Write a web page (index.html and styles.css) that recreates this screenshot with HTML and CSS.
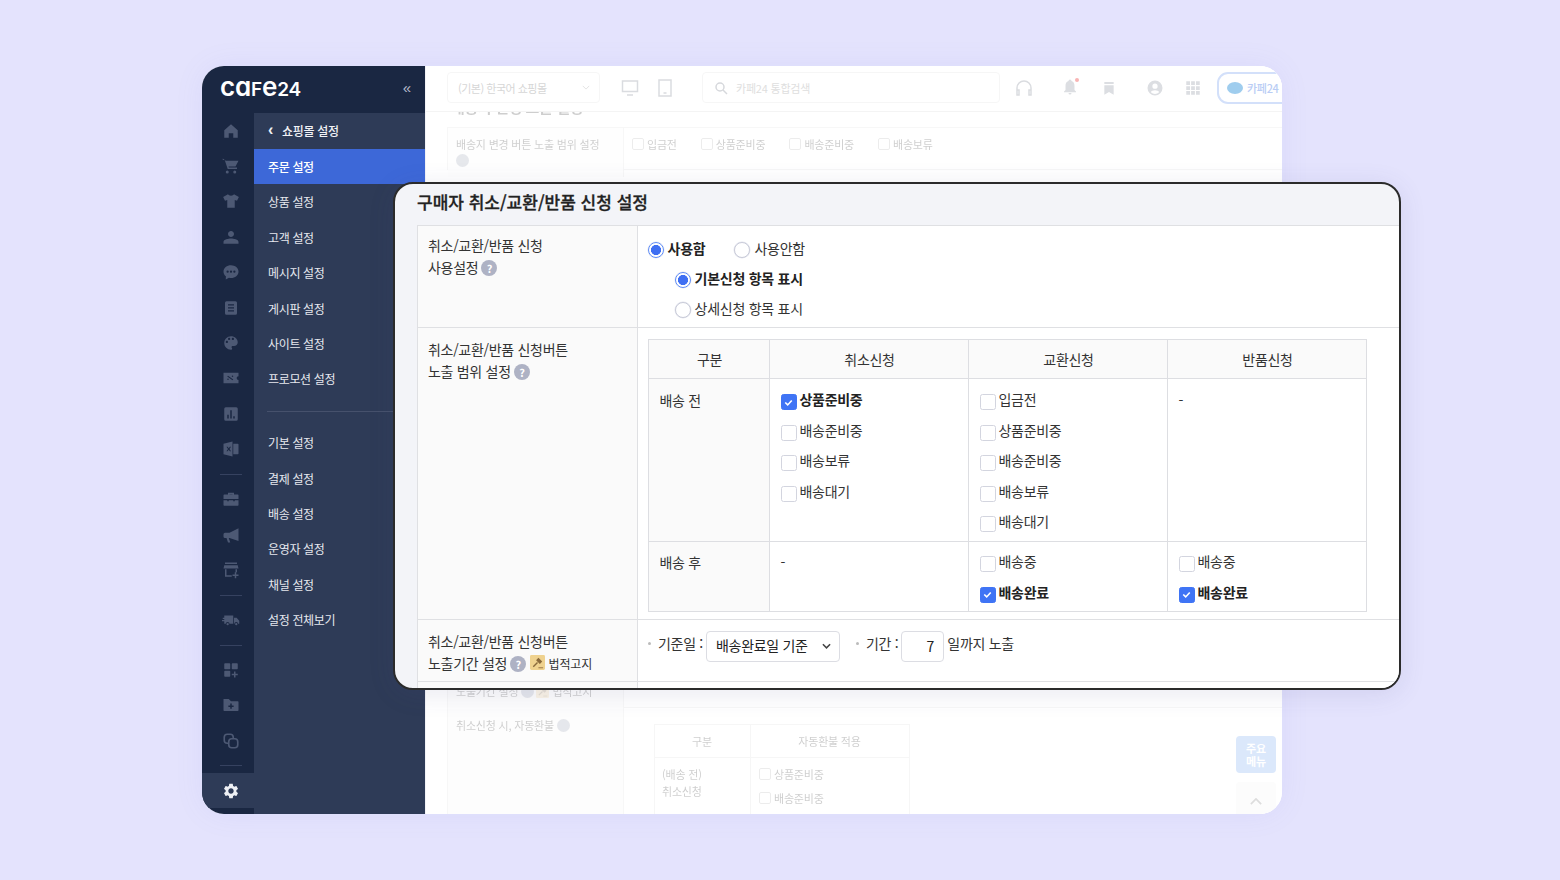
FILE: index.html
```html
<!DOCTYPE html>
<html lang="ko">
<head>
<meta charset="utf-8">
<title>구매자 취소/교환/반품 신청 설정</title>
<link rel="stylesheet" href="styles.css">
</head>
<body>
<svg class="defs" aria-hidden="true">
  <symbol id="i-home" viewBox="0 0 24 24"><path d="M12 3 3 11v10h6v-6h6v6h6V11z"/></symbol>
  <symbol id="i-cart" viewBox="0 0 24 24"><path d="M7 18a2 2 0 1 0 0 4 2 2 0 0 0 0-4zm10 0a2 2 0 1 0 0 4 2 2 0 0 0 0-4zM1 2v2h2.600l1 3 3 9H20v-2H9.200l-.5-1.500H18L22 5H5z"/></symbol>
  <symbol id="i-shirt" viewBox="0 0 24 24"><path d="M8 3 1.500 6.500 4 11.500l3-1V21h10V10.500l3 1 2.500-5L16 3c-1 2.500-7 2.500-8 0z"/></symbol>
  <symbol id="i-person" viewBox="0 0 24 24"><path d="M12 12c2.210 0 4-1.790 4-4s-1.790-4-4-4-4 1.790-4 4 1.790 4 4 4zm0 2c-3.500 0-10 1.340-10 4.500V21h20v-2.500C22 15.340 15.500 14 12 14z"/></symbol>
  <symbol id="i-chat" viewBox="0 0 24 24"><path fill-rule="evenodd" d="M12 3C6.500 3 2 6.600 2 11.500c0 2.500 1.200 4.700 3.200 6.200L5 22l4.300-2.400c.9.200 1.800.3 2.700.3 5.500 0 10-3.600 10-8.400S17.500 3 12 3zM7.500 10a1.500 1.500 0 1 1 0 3 1.500 1.500 0 0 1 0-3zm4.500 0a1.500 1.500 0 1 1 0 3 1.500 1.500 0 0 1 0-3zm4.500 0a1.500 1.500 0 1 1 0 3 1.500 1.500 0 0 1 0-3z"/></symbol>
  <symbol id="i-doc" viewBox="0 0 24 24"><path fill-rule="evenodd" d="M6 3h12a2 2 0 0 1 2 2v14a2 2 0 0 1-2 2H6a2 2 0 0 1-2-2V5a2 2 0 0 1 2-2zm2 4v1.500h8V7zm0 4v1.500h8V11zm0 4v1.500h8V15z"/></symbol>
  <symbol id="i-palette" viewBox="0 0 24 24"><path d="M12 3c-4.970 0-9 4.030-9 9s4.030 9 9 9c.83 0 1.500-.67 1.500-1.500 0-.39-.15-.74-.39-1.010-.23-.26-.38-.61-.38-.99 0-.83.67-1.500 1.500-1.500H16c2.760 0 5-2.240 5-5 0-4.420-4.030-8-9-8zm-5.500 9c-.83 0-1.500-.67-1.500-1.500S5.670 9 6.500 9 8 9.670 8 10.500 7.330 12 6.500 12zm3-4C8.670 8 8 7.330 8 6.500S8.670 5 9.500 5s1.500.67 1.500 1.500S10.330 8 9.500 8zm5 0c-.83 0-1.500-.67-1.500-1.500S13.670 5 14.500 5s1.500.67 1.500 1.500S15.330 8 14.500 8z"/></symbol>
  <symbol id="i-ticket" viewBox="0 0 24 24"><path fill-rule="evenodd" d="M2 5h20v4.500a2.500 2.500 0 0 0 0 5V19H2zm6 4-1 1 7 5 1-1zm0 3.500a1 1 0 1 0 0 2 1 1 0 0 0 0-2zm6-4a1 1 0 1 0 0 2 1 1 0 0 0 0-2z"/></symbol>
  <symbol id="i-chart" viewBox="0 0 24 24"><path fill-rule="evenodd" d="M5 3h14a2 2 0 0 1 2 2v14a2 2 0 0 1-2 2H5a2 2 0 0 1-2-2V5a2 2 0 0 1 2-2zm2 10v5h2v-5zm4-6v11h2V7zm4 8v3h2v-3z"/></symbol>
  <symbol id="i-excel" viewBox="0 0 24 24"><path fill-rule="evenodd" d="M2 5l12-3v20L2 19zm4 4 2 3-2 3h1.500L9 13l1.500 2H12l-2-3 2-3h-1.500L9 11 7.500 9zM15 5h6a1 1 0 0 1 1 1v12a1 1 0 0 1-1 1h-6z"/></symbol>
  <symbol id="i-box" viewBox="0 0 24 24"><path d="M8 6V3.500h8V6h5a1 1 0 0 1 1 1v5H2V7a1 1 0 0 1 1-1zm2 0h4V5.500h-4zM2 13.500h5V15h2v-1.500h6V15h2v-1.500h5V20a1 1 0 0 1-1 1H3a1 1 0 0 1-1-1z"/></symbol>
  <symbol id="i-mega" viewBox="0 0 24 24"><path d="M22 3v17L10 16H9l2 6H8l-2-6H4a2 2 0 0 1-2-2v-3a2 2 0 0 1 2-2h6z"/></symbol>
  <symbol id="i-store" viewBox="0 0 24 24"><path d="M4 2h16v2H4zM3 5.500h18L22 10H2zM4 11h2v8h7v2H4zM18 11h2v4h-2zM17 15h2v3h3v2h-3v3h-2v-3h-3v-2h3z"/></symbol>
  <symbol id="i-truck" viewBox="0 0 24 24"><path d="M3 6h12v11H10a2.500 2.500 0 0 0-5 0H3zM1 9h4v1.500H1zM0 12h4v1.500H0zM16 9h3.500l3.500 4v4h-1.500a2.500 2.500 0 0 0-5 0H16zM7.500 16a1.500 1.500 0 1 1 0 3 1.500 1.500 0 0 1 0-3zM19 16a1.500 1.500 0 1 1 0 3 1.500 1.500 0 0 1 0-3z"/></symbol>
  <symbol id="i-grid" viewBox="0 0 24 24"><path d="M4 3h6a1 1 0 0 1 1 1v6a1 1 0 0 1-1 1H4a1 1 0 0 1-1-1V4a1 1 0 0 1 1-1zm10 0h6a1 1 0 0 1 1 1v6a1 1 0 0 1-1 1h-6a1 1 0 0 1-1-1V4a1 1 0 0 1 1-1zM4 13h6a1 1 0 0 1 1 1v6a1 1 0 0 1-1 1H4a1 1 0 0 1-1-1v-6a1 1 0 0 1 1-1zm12 1h2v3h3v2h-3v3h-2v-3h-3v-2h3z"/></symbol>
  <symbol id="i-folder" viewBox="0 0 24 24"><path fill-rule="evenodd" d="M2 4h7l3 3h9a1 1 0 0 1 1 1v11a1 1 0 0 1-1 1H3a1 1 0 0 1-1-1zm9 6v2.500H8.500v2H11V17h2v-2.500h2.500v-2H13V10z"/></symbol>
  <symbol id="i-link" viewBox="0 0 24 24"><path fill="none" stroke="currentColor" stroke-width="2.200" d="M8 15H7a4 4 0 0 1-4-4V7a4 4 0 0 1 4-4h4a4 4 0 0 1 4 4v1M13 9h4a4 4 0 0 1 4 4v4a4 4 0 0 1-4 4h-4a4 4 0 0 1-4-4v-4a4 4 0 0 1 4-4z"/></symbol>
  <symbol id="i-gear" viewBox="0 0 24 24"><path d="M19.140 12.940c.04-.3.06-.61.06-.94 0-.32-.02-.64-.07-.94l2.030-1.580c.18-.14.23-.41.12-.61l-1.920-3.320c-.12-.22-.37-.29-.59-.22l-2.390.96c-.5-.38-1.030-.7-1.620-.94l-.36-2.540c-.04-.24-.24-.41-.48-.41h-3.840c-.24 0-.43.17-.47.41l-.36 2.540c-.59.24-1.130.57-1.620.94l-2.390-.96c-.22-.08-.47 0-.59.22L2.740 8.870c-.12.21-.08.47.12.61l2.030 1.580c-.05.3-.09.63-.09.94s.02.64.07.94l-2.030 1.580c-.18.14-.23.41-.12.61l1.920 3.320c.12.22.37.29.59.22l2.390-.96c.5.38 1.030.7 1.620.94l.36 2.540c.05.24.24.41.48.41h3.840c.24 0 .44-.17.47-.41l.36-2.540c.59-.24 1.130-.56 1.620-.94l2.390.96c.22.08.47 0 .59-.22l1.920-3.320c.12-.22.07-.47-.12-.61l-2.010-1.580zM12 15.600c-1.980 0-3.600-1.620-3.600-3.600s1.620-3.600 3.600-3.600 3.600 1.620 3.600 3.600-1.620 3.600-3.600 3.600z"/></symbol>
  <symbol id="i-check" viewBox="0 0 16 16"><path fill="none" stroke="#fff" stroke-width="2" d="M4 8l3 3 5-5.500"/></symbol>
  <symbol id="i-legal" viewBox="0 0 16 16"><rect width="16" height="16" rx="1.500" fill="#efd28f"/><path d="M3.500 12.500 8 8" fill="none" stroke="#8a6a3c" stroke-width="1.500"/><path d="M6.500 5.500 9 3l4 4-2.500 2.500z" fill="#8a6a3c"/><path d="M9 13h5v1.200H9z" fill="#a5814e"/></symbol>
</svg>

<div class="stage">
  <div class="app">
    <aside class="side">
      <div class="brand">
        <span class="logo"><span class="lx">ca</span>F<span class="lx">e</span>24</span>
        <span class="collapse">«</span>
      </div>
      <div class="side-body">
        <nav class="rail">
          <span class="ri"><svg><use href="#i-home"/></svg></span>
          <span class="ri"><svg><use href="#i-cart"/></svg></span>
          <span class="ri"><svg><use href="#i-shirt"/></svg></span>
          <span class="ri"><svg><use href="#i-person"/></svg></span>
          <span class="ri"><svg><use href="#i-chat"/></svg></span>
          <span class="ri"><svg><use href="#i-doc"/></svg></span>
          <span class="ri"><svg><use href="#i-palette"/></svg></span>
          <span class="ri"><svg><use href="#i-ticket"/></svg></span>
          <span class="ri"><svg><use href="#i-chart"/></svg></span>
          <span class="ri"><svg><use href="#i-excel"/></svg></span>
          <hr class="rail-sep">
          <span class="ri"><svg><use href="#i-box"/></svg></span>
          <span class="ri"><svg><use href="#i-mega"/></svg></span>
          <span class="ri"><svg><use href="#i-store"/></svg></span>
          <hr class="rail-sep">
          <span class="ri"><svg><use href="#i-truck"/></svg></span>
          <hr class="rail-sep">
          <span class="ri"><svg><use href="#i-grid"/></svg></span>
          <span class="ri"><svg><use href="#i-folder"/></svg></span>
          <span class="ri"><svg><use href="#i-link"/></svg></span>
          <hr class="rail-sep">
          <span class="ri ri-on"><svg><use href="#i-gear"/></svg></span>
        </nav>
        <nav class="menu">
          <div class="menu-head"><span class="chev">‹</span>쇼핑몰 설정</div>
          <a class="mi mi-on">주문 설정</a>
          <a class="mi">상품 설정</a>
          <a class="mi">고객 설정</a>
          <a class="mi">메시지 설정</a>
          <a class="mi">게시판 설정</a>
          <a class="mi">사이트 설정</a>
          <a class="mi">프로모션 설정</a>
          <hr class="menu-sep">
          <a class="mi">기본 설정</a>
          <a class="mi">결제 설정</a>
          <a class="mi">배송 설정</a>
          <a class="mi">운영자 설정</a>
          <a class="mi">채널 설정</a>
          <a class="mi">설정 전체보기</a>
        </nav>
      </div>
    </aside>

    <main class="main">
      <header class="top">
        <div class="shop-select"><span>(기본) 한국어 쇼핑몰</span><svg class="sel-arrow" viewBox="0 0 10 6"><path d="M1 1l4 4 4-4"/></svg></div>
        <svg class="ti ti-pc" viewBox="0 0 18 18"><path d="M1.500 2h15v10.500h-15zM6 16h6"/></svg>
        <svg class="ti ti-tab" viewBox="0 0 14 18"><path d="M1 1h12v16H1zM5.500 14h3"/></svg>
        <div class="search"><svg class="ti-s" viewBox="0 0 14 14"><circle cx="6" cy="6" r="4"/><path d="M9 9l4 4"/></svg><span>카페24 통합검색</span></div>
        <svg class="ti ti-head" viewBox="0 0 18 18"><path d="M2 15V9a7 7 0 0 1 14 0v6M2 11h2v5H2zM14 11h2v5h-2z"/></svg>
        <span class="bell"><svg class="tf" viewBox="0 0 24 24"><path d="M12 2a2 2 0 0 1 2 2c3 1 4 3 4 7v5l2 2v1H4v-1l2-2v-5c0-4 1-6 4-7a2 2 0 0 1 2-2zm-2 18h4a2 2 0 0 1-4 0z"/></svg><i class="dot"></i></span>
        <svg class="tf tf-b" viewBox="0 0 24 24"><path d="M5 3h14v3H5zM5 8h14v14l-7-4-7 4z"/></svg>
        <svg class="tf tf-u" viewBox="0 0 24 24"><path fill-rule="evenodd" d="M12 2a10 10 0 1 1 0 20 10 10 0 0 1 0-20zm0 4a3.500 3.500 0 1 0 0 7 3.500 3.500 0 0 0 0-7zm0 9c-2.500 0-5 1-5.500 2.500a7.500 7.500 0 0 0 11 0C17 16 14.500 15 12 15z"/></svg>
        <svg class="tf tf-g" viewBox="0 0 24 24"><path d="M3 3h5v5H3zM9.500 3h5v5h-5zM16 3h5v5h-5zM3 9.500h5v5H3zM9.500 9.500h5v5h-5zM16 9.500h5v5h-5zM3 16h5v5H3zM9.500 16h5v5h-5zM16 16h5v5h-5z"/></svg>
        <div class="pill"><i class="pill-ic"></i><span>카페24</span></div>
      </header>

      <div class="faded">
        <div class="page-title"><span>배송지 변경 노출 설정</span></div>
        <div class="bg-row bg-first">
          <div class="bg-th"><span>배송지 변경 버튼 노출 범위 설정</span><i class="bg-q bg-q-block"></i></div>
          <div class="bg-td">
            <label class="bg-c"><i></i>입금전</label>
            <label class="bg-c"><i></i>상품준비중</label>
            <label class="bg-c"><i></i>배송준비중</label>
            <label class="bg-c"><i></i>배송보류</label>
          </div>
        </div>
        <div class="bg-row bg-hidden">
          <div class="bg-th"><span>노출기간 설정</span><i class="bg-q"></i><svg class="bg-legal"><use href="#i-legal"/></svg><span class="bg-legal-t">법적고지</span></div>
          <div class="bg-td"></div>
        </div>
        <div class="bg-row bg-last">
          <div class="bg-th"><span>취소신청 시, 자동환불</span><i class="bg-q"></i></div>
          <div class="bg-td">
            <table class="bg-table">
              <tr class="bg-hd"><th>구분</th><th>자동환불 적용</th></tr>
              <tr><td class="bg-l">(배송 전)<br>취소신청</td><td class="bg-r"><label class="bg-c"><i></i>상품준비중</label><label class="bg-c"><i></i>배송준비중</label></td></tr>
            </table>
          </div>
        </div>
      </div>
      <div class="float-menu">주요<br>메뉴</div>
      <div class="float-up"><svg viewBox="0 0 14 8"><path d="M1 7l6-6 6 6"/></svg></div>
    </main>
  </div>

  <section class="card">
    <h2 class="card-title">구매자 취소/교환/반품 신청 설정</h2>
    <div class="row row-1">
      <div class="rh">취소/교환/반품 신청<br>사용설정 <i class="q">?</i></div>
      <div class="rd rd-radio">
        <div class="opt-line">
          <label class="radio on"><i></i>사용함</label>
          <label class="radio"><i></i>사용안함</label>
        </div>
        <div class="opt-line opt-sub"><label class="radio on"><i></i>기본신청 항목 표시</label></div>
        <div class="opt-line opt-sub"><label class="radio"><i></i>상세신청 항목 표시</label></div>
      </div>
    </div>
    <div class="row row-2">
      <div class="rh">취소/교환/반품 신청버튼<br>노출 범위 설정 <i class="q">?</i></div>
      <div class="rd rd-table">
        <table class="grid">
          <thead><tr><th>구분</th><th>취소신청</th><th>교환신청</th><th>반품신청</th></tr></thead>
          <tbody>
            <tr class="tr-a">
              <td class="lab">배송 전</td>
              <td>
                <label class="cb on"><i><svg><use href="#i-check"/></svg></i>상품준비중</label>
                <label class="cb"><i></i>배송준비중</label>
                <label class="cb"><i></i>배송보류</label>
                <label class="cb"><i></i>배송대기</label>
              </td>
              <td>
                <label class="cb"><i></i>입금전</label>
                <label class="cb"><i></i>상품준비중</label>
                <label class="cb"><i></i>배송준비중</label>
                <label class="cb"><i></i>배송보류</label>
                <label class="cb"><i></i>배송대기</label>
              </td>
              <td class="dash">-</td>
            </tr>
            <tr class="tr-b">
              <td class="lab">배송 후</td>
              <td class="dash">-</td>
              <td>
                <label class="cb"><i></i>배송중</label>
                <label class="cb on"><i><svg><use href="#i-check"/></svg></i>배송완료</label>
              </td>
              <td>
                <label class="cb"><i></i>배송중</label>
                <label class="cb on"><i><svg><use href="#i-check"/></svg></i>배송완료</label>
              </td>
            </tr>
          </tbody>
        </table>
      </div>
    </div>
    <div class="row row-3">
      <div class="rh">취소/교환/반품 신청버튼<br>노출기간 설정 <i class="q">?</i> <svg class="legal"><use href="#i-legal"/></svg> <span class="legal-t">법적고지</span></div>
      <div class="rd rd-period">
        <span class="field">기준일 :</span>
        <div class="select">배송완료일 기준<svg viewBox="0 0 10 6"><path d="M1 1l4 4 4-4"/></svg></div>
        <span class="field field-2">기간 :</span>
        <div class="num">7</div>
        <span class="after">일까지 노출</span>
      </div>
    </div>
    <div class="row row-4"><div class="rh"></div><div class="rd"></div></div>
  </section>
</div>
</body>
</html>
```

FILE: styles.css
```css
* { box-sizing: border-box; }
html, body { margin: 0; height: 100%; }
body {
  background: #e4e3fd;
  font-family: "Noto Sans CJK KR", "Noto Sans", sans-serif;
  color: #333;
  overflow: hidden;
}
.defs { width: 0; height: 0; display: block; }
i { font-style: normal; display: block; }
.stage { position: relative; padding: 66px 0 0 202px; height: 880px; }
.app {
  width: 1080px; height: 748px; display: flex; overflow: hidden;
  border-radius: 22px; background: #fff;
  box-shadow: 0 0 30px rgba(110, 110, 220, .08);
}

/* sidebar */
.side { width: 223px; flex: none; display: flex; flex-direction: column; background: #1a2742; }
.brand { height: 47px; flex: none; display: flex; align-items: center; justify-content: space-between; padding: 0 14px 5px 18px; }
.logo { font-family: Inter, sans-serif; font-feature-settings: "cv11"; font-weight: 600; font-size: 19px; letter-spacing: -.2px; color: #fff; line-height: 1; white-space: nowrap; }
.lx { font-size: 26px; }
.collapse { color: #b5bbca; font-size: 15px; line-height: 1; font-family: "Liberation Sans", sans-serif; }
.side-body { flex: 1; display: flex; min-height: 0; }
.rail { width: 52px; flex: none; display: flex; flex-direction: column; align-items: center; }
.ri { height: 35.4px; flex: none; width: 100%; padding-left: 6px; display: flex; align-items: center; justify-content: center; color: #4d5974; fill: currentColor; }
.ri svg { width: 18px; height: 18px; fill: currentColor; }
.ri-on { height: 35px; background: #2e3b57; color: #eef0f4; }
.rail-sep { width: 22px; height: 1px; margin: 7px 0 6.600px 6px; border: 0; background: #364260; flex: none; }
.menu { flex: 1; background: #2e3b57; font-size: 12px; color: #e6e8ee; }
.menu-head { height: 35.800px; display: flex; align-items: center; padding-left: 14px; color: #f1f2f6; font-weight: 500; letter-spacing: -.3px; }
.chev { font-family: "Liberation Sans", sans-serif; font-weight: 700; font-size: 16px; width: 14px; margin-top: -1px; }
.mi { height: 35.400px; display: flex; align-items: center; padding-left: 14px; letter-spacing: -.35px; }
.mi-on { background: #3d68d8; color: #fff; font-weight: 500; }
.menu-sep { height: 1px; border: 0; margin: 14px 0 13.500px 13px; background: #46516c; }

/* faded main */
.main { flex: 1; position: relative; background: #fff; min-width: 0; display: flex; flex-direction: column; overflow: hidden; border-left: 1px solid #f2f2f6; }
.top { height: 46px; flex: none; display: flex; align-items: flex-start; padding: 6px 0 0 21px; position: relative; background: #fff; border-bottom: 1px solid #f4f4f4; }
.top > * { flex: none; }
.top svg { fill: none; }
.shop-select { width: 153px; height: 31px; border: 1px solid #f6f6f6; border-radius: 4px; display: flex; align-items: center; justify-content: space-between; padding: 0 9px 0 10px; font-size: 11px; letter-spacing: -.5px; color: #d6d6d6; }
.sel-arrow { width: 8px; height: 5px; stroke: #ddd; }
.ti { stroke: #dadce0; stroke-width: 1.500; }
.ti-pc { width: 18px; height: 18px; margin: 7px 0 0 21px; }
.ti-tab { width: 14px; height: 18px; margin: 7px 0 0 19px; }
.search { width: 298px; height: 31px; margin-left: 30px; border: 1px solid #f6f6f6; border-radius: 4px; display: flex; align-items: center; padding-left: 11px; gap: 8px; font-size: 11px; letter-spacing: -.2px; color: #dedede; }
.ti-s { width: 14px; height: 14px; stroke: #d6d8dc; stroke-width: 1.500; }
.ti-head { width: 18px; height: 18px; margin: 7px 0 0 15px; }
.tf { width: 18px; height: 18px; fill: #dcdee2 !important; }
.bell { position: relative; margin: 6px 0 0 28px; display: block; height: 18px; }
.bell .tf { display: block; }
.dot { position: absolute; right: 0; top: 0; width: 4px; height: 4px; border-radius: 50%; background: #f8b4b4; }
.tf-b { margin: 7px 0 0 22px; width: 16px; }
.tf-u { margin: 7px 0 0 29px; }
.tf-g { margin: 7px 0 0 20px; }
.pill { width: 90px; height: 32px; margin-left: 15px; border: 2px solid #d3e0fa; border-radius: 11px; display: flex; align-items: center; padding-left: 8px; gap: 4px; font-size: 11px; font-weight: 500; color: #b9cdf5; letter-spacing: -.3px; }
.pill-ic { width: 16px; height: 12px; border-radius: 50%; background: #9fcdee; }

.faded { flex: 1; opacity: .22; filter: blur(.4px); padding-left: 21px; display: flex; flex-direction: column; }
.page-title { height: 15px; overflow: hidden; display: flex; align-items: flex-end; padding: 0 0 12px 4px; }
.page-title span { font-size: 15px; font-weight: 700; line-height: 16px; letter-spacing: -.4px; color: #222; white-space: nowrap; }
.bg-row { display: grid; grid-template-columns: 176px 1fr; border: 1px solid #dcdcdc; border-right: 0; font-size: 11px; letter-spacing: -.2px; }
.bg-th { padding: 10px 8px; border-right: 1px solid #dcdcdc; background: #f8f8f8; color: #222; line-height: 15px; }
.bg-td { padding: 8px 8px; color: #222; display: flex; gap: 24px; }
.bg-first { height: 43px; }
.bg-q { display: inline-block; width: 13px; height: 13px; border-radius: 50%; background: #8e95aa; vertical-align: -2px; margin-left: 3px; }
.bg-q-block { display: block; margin: 2px 0 0; }
.bg-first .bg-th { padding-top: 9px; white-space: nowrap; }
.bg-c { display: flex; align-items: center; gap: 3px; height: 16px; }
.bg-c i { width: 12px; height: 12px; border: 1px solid #aaa; border-radius: 2px; }
.bg-hidden { margin-top: 511px; height: 27px; border-top: 0; }
.bg-hidden .bg-th { padding-top: 3px; white-space: nowrap; }
.bg-legal { width: 13px; height: 13px; vertical-align: -2px; margin-left: 2px; }
.bg-legal-t { margin-left: 3px; }
.bg-last { flex: 1; border-top: 0; border-bottom: 0; }
.bg-last .bg-td { padding: 16px 0 0 30px; }
.bg-table { border-collapse: collapse; width: 256px; height: 90px; align-self: flex-start; font-size: 11px; }
.bg-table th, .bg-table td { border: 1px solid #d8d8d8; font-weight: 400; }
.bg-table th:first-child, .bg-table .bg-l { width: 96px; }
.bg-hd { height: 33px; }
.bg-hd th { text-align: center; padding-right: 2px; }
.bg-table td { vertical-align: top; }
.bg-table .bg-l { padding: 8px 7px; line-height: 16.500px; }
.bg-table .bg-r { padding: 8px 8px; }
.bg-table td .bg-c { margin-bottom: 8px; }
.float-menu { position: absolute; right: 6px; top: 670px; width: 40px; height: 37px; border-radius: 4px; background: #dbe8fb; color: #fff; font-size: 11px; font-weight: 700; line-height: 13px; text-align: center; padding-top: 6px; }
.float-up { position: absolute; right: 6px; top: 716px; width: 40px; height: 36px; border-radius: 4px; background: #fcfcfc; display: flex; align-items: center; justify-content: center; padding-top: 3px; }
.float-up svg { width: 12px; height: 7px; fill: none; stroke: #ddd; stroke-width: 2; }

/* foreground card */
.card {
  position: absolute; left: 393px; top: 182px; width: 1008px; height: 508px;
  background: #f3f4f8; border: 2px solid #2b2b2b; border-radius: 20px; overflow: hidden;
  padding-left: 22px;
  box-shadow: 0 4px 26px rgba(70, 70, 130, .12);
}
.card-title { margin: 0; height: 41px; padding-top: 5px; font-size: 17px; font-weight: 500; line-height: 26px; color: #222; letter-spacing: 0; -webkit-text-stroke: .3px #222; }
.row { display: grid; grid-template-columns: 220px 1fr; border-top: 1px solid #dfe0e3; border-left: 1px solid #dfe0e3; font-size: 14px; line-height: 22px; color: #333; }
.row-1 { height: 102px; }
.row-2 { height: 292px; }
.row-3 { height: 62px; }
.row-4 { height: 10px; }
.rh { background: #fafafa; padding: 0 10px; border-right: 1px solid #dfe0e3; letter-spacing: -.3px; }
.rd { background: #fff; min-width: 0; }
.q { display: inline-flex; width: 16px; height: 16px; border-radius: 50%; background: #aeb2c4; color: #fff; font-size: 11px; font-weight: 700; line-height: 16px; align-items: center; justify-content: center; vertical-align: 0; margin-left: -.5px; }
.row-1 .rh { padding-top: 8px; }
.row-2 .rh { padding-top: 10px; }
.row-3 .rh { padding-top: 10px; }
.legal { display: inline-block; width: 15px; height: 15px; vertical-align: -1px; }
.legal-t { font-size: 12px; letter-spacing: -.1px; }

/* radios */
.rd-radio { padding: 9px 0 0 9.500px; }
.opt-line { display: flex; height: 30px; gap: 29px; align-items: flex-start; }
.opt-sub { padding-left: 27px; }
.radio { display: flex; align-items: center; gap: 4px; height: 26px; letter-spacing: -.25px; }
.radio i { width: 16px; height: 16px; border-radius: 50%; border: 1px solid #c9cbd8; background: #fff; margin-top: 3px; box-shadow: 0 0 0 .5px #e4e6ef; }
.radio.on { font-weight: 700; color: #222; }
.radio.on i { border: 1.500px solid #5f8cf6; background: radial-gradient(circle, #3f6ff2 0 4.800px, #fff 5.300px); }

/* inner grid */
.rd-table { padding: 11px 0 0 10px; }
.grid { border-collapse: collapse; table-layout: fixed; width: 719px; height: 272px; }
.grid th, .grid td { border: 1px solid #dddee2; }
.grid th { height: 39px; padding: 0 0 0 1px; background: #fafafa; font-weight: 400; text-align: center; letter-spacing: -.3px; color: #333; }
.grid th:first-child, .grid .lab { width: 121px; }
.grid th:nth-child(2), .grid th:nth-child(3) { width: 199px; }
.grid td { vertical-align: top; padding: 9px 0 0 10.500px; letter-spacing: -.3px; }
.grid .lab { background: #fafafa; padding-top: 10px; }
.tr-a { height: 163px; }
.tr-b { height: 70px; }
.tr-a .dash { padding-top: 10px; }
.tr-b td { padding-top: 8px; }
.tr-b .lab, .tr-b .dash { padding-top: 9px; }
.cb { display: flex; align-items: flex-start; gap: 3px; height: 30.500px; line-height: 22px; }
.cb i { width: 16px; height: 16px; border: 1.500px solid #d3d5df; border-radius: 2.500px; background: #fff; margin-top: 6px; flex: none; }
.cb.on { font-weight: 700; color: #222; }
.cb.on i { background: #3f74f5; border-color: #3f74f5; display: flex; align-items: center; justify-content: center; }
.cb.on i svg { width: 13px; height: 13px; }

/* period */
.rd-period { display: flex; align-items: flex-start; padding-top: 11px; }
.field { position: relative; margin: 1px 0 0 20px; letter-spacing: -.3px; }
.field::before { content: ""; position: absolute; left: -10px; top: 10px; width: 3px; height: 3px; border-radius: 50%; background: #bbb; }
.field-2 { margin-left: 26px; }
.select { width: 134px; height: 31px; margin-left: 3px; border: 1px solid #dcdde3; border-radius: 4px; background: #fff; display: flex; align-items: center; justify-content: space-between; padding: 0 8px 3px 9px; letter-spacing: -.3px; color: #222; }
.select svg { width: 9px; height: 6px; margin-top: 2px; fill: none; stroke: #444; stroke-width: 1.700; }
.num { width: 43px; height: 31px; margin-left: 3px; border: 1px solid #dcdde3; border-radius: 4px; text-align: right; padding: 3px 9px 0 0; color: #222; }
.after { margin: 1px 0 0 3px; letter-spacing: -.3px; }
```
